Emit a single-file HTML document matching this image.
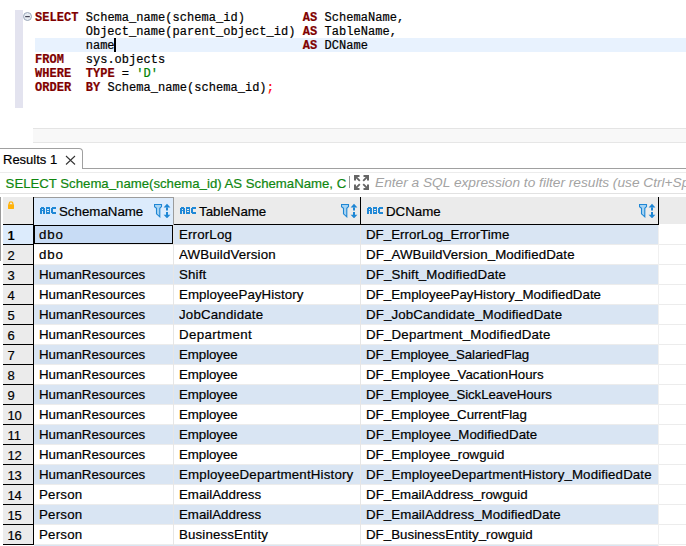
<!DOCTYPE html>
<html><head><meta charset="utf-8"><style>
*{margin:0;padding:0;box-sizing:border-box}
html,body{width:686px;height:546px;overflow:hidden;background:#fff}
body{position:relative;font-family:"Liberation Sans",sans-serif;color:#000}
.a{position:absolute}
.code{position:absolute;left:35px;top:11px;letter-spacing:0.036px;font-family:"Liberation Mono",monospace;font-size:12px;line-height:14px;white-space:pre;color:#000}
.k{color:#7f0000;font-weight:bold}
.s{color:#008000}
.r{color:#f00}
.cell{position:absolute;height:19px;font-size:13.3px;line-height:19px;white-space:nowrap;overflow:hidden}
.abc{position:absolute}
.u{position:relative;top:-1px}
div{-webkit-text-stroke:0.2px currentColor}
.filt{position:absolute}
</style></head><body>

<div class="a" style="left:15px;top:10px;width:8px;height:98px;background:#e3e3ef"></div>
<div class="a" style="left:35px;top:38px;width:651px;height:14px;background:#e8f2fe"></div>
<svg class="a" style="left:23px;top:12px" width="10" height="10" viewBox="0 0 10 10"><circle cx="4.5" cy="4.5" r="4" fill="#e6ebf2" stroke="#9aa6b8" stroke-width="1"/><rect x="2.2" y="4" width="4.6" height="1.2" fill="#445"/></svg>
<div class="code"><span class="k">SELECT</span> Schema_name(schema_id)        <span class="k">AS</span> SchemaName,
       Object_name(parent_object_id) <span class="k">AS</span> TableName,
       name                          <span class="k">AS</span> DCName
<span class="k">FROM</span>   sys.objects
<span class="k">WHERE</span>  <span class="k">TYPE</span> = <span class="s">'D'</span>
<span class="k">ORDER</span>  <span class="k">BY</span> Schema_name(schema_id)<span class="r">;</span></div>
<div class="a" style="left:114px;top:38px;width:2px;height:14px;background:#000"></div>
<div class="a" style="left:33px;top:128px;width:653px;height:15px;background:#f8f8f8;border-top:1px solid #e4e4e4;border-bottom:1px solid #e6e6e6"></div>
<div class="a" style="left:-1px;top:148px;width:84px;height:21px;background:#fff;border:1px solid #a0a0a0;border-bottom:none;border-top-right-radius:4px"></div>
<div class="a" style="left:83px;top:168px;width:603px;height:1px;background:#a0a0a0"></div>
<div class="a" style="left:3px;top:152px;font-size:13px;line-height:16px">Results 1</div>
<svg class="a" style="left:65px;top:154.5px" width="11" height="10" viewBox="0 0 11 10"><path d="M1 1L10 9.5M10 1L1 9.5" stroke="#333" stroke-width="1.05"/></svg>
<div class="a" style="left:0;top:172px;width:686px;height:1px;background:#ececec"></div>
<div class="a" style="left:5.6px;top:175.6px;font-size:13.2px;line-height:16px;color:#0f870f;white-space:nowrap">SELECT Schema<span class="u">_</span>name(schema<span class="u">_</span>id) AS SchemaName, C</div>
<div class="a" style="left:349px;top:176px;width:1px;height:12px;background:#999"></div>
<svg class="a" style="left:354px;top:175px" width="16" height="16" viewBox="0 0 16 16"><g fill="#666"><path d="M0 0H5.5V2H2V5.5H0Z"/><path d="M15 0H9.5V2H13V5.5H15Z"/><path d="M0 15H5.5V13H2V9.5H0Z"/><path d="M15 15H9.5V13H13V9.5H15Z"/></g><g stroke="#666" stroke-width="1.8"><path d="M1 1L5.8 5.8M14 1L9.2 5.8M1 14L5.8 9.2M14 14L9.2 9.2"/></g></svg>
<div class="a" style="left:375px;top:174.6px;font-size:13.7px;line-height:16px;color:#a3a3a3;-webkit-text-stroke:0;font-style:italic;white-space:nowrap">Enter a SQL expression to filter results (use Ctrl+Space)</div>
<div class="a" style="left:0;top:193px;width:686px;height:1px;background:#e2e2e2"></div>
<div class="a" style="left:0;top:197px;width:1px;height:64px;background:#9a9a9a"></div>
<div class="a" style="left:3px;top:197px;width:683px;height:27px;background:#ebebeb"></div>
<div class="a" style="left:3px;top:224px;width:655px;height:1px;background:#000"></div>
<div class="a" style="left:34px;top:197px;width:140px;height:28px;background:#dcebfc;border-top:1px solid #9c9c9c;border-right:1px solid #9c9c9c"></div>
<div class="a" style="left:33px;top:197px;width:1px;height:348px;background:#000"></div>
<div class="a" style="left:360px;top:197px;width:1px;height:28px;background:#000"></div>
<div class="a" style="left:658px;top:197px;width:1px;height:28px;background:#000"></div>
<svg class="a" style="left:8px;top:201px" width="6" height="8" viewBox="0 0 6 8"><path d="M1.2 3.5V2.6a1.8 1.8 0 0 1 3.6 0V3.5" stroke="#ffb20a" stroke-width="1.3" fill="none"/><rect x="0" y="3.2" width="6" height="4.8" rx="0.4" fill="#ffb20a"/></svg>
<svg class="abc" style="left:40px;top:207px" width="16" height="7" viewBox="0 0 16 7" shape-rendering="crispEdges"><g fill="#2088d6"><rect x="1" y="0" width="1" height="1"/><rect x="2" y="0" width="1" height="1"/><rect x="3" y="0" width="1" height="1"/><rect x="0" y="1" width="1" height="1"/><rect x="1" y="1" width="1" height="1"/><rect x="2" y="1" width="1" height="1"/><rect x="3" y="1" width="1" height="1"/><rect x="4" y="1" width="1" height="1"/><rect x="0" y="2" width="1" height="1"/><rect x="1" y="2" width="1" height="1"/><rect x="3" y="2" width="1" height="1"/><rect x="4" y="2" width="1" height="1"/><rect x="0" y="3" width="1" height="1"/><rect x="1" y="3" width="1" height="1"/><rect x="2" y="3" width="1" height="1"/><rect x="3" y="3" width="1" height="1"/><rect x="4" y="3" width="1" height="1"/><rect x="0" y="4" width="1" height="1"/><rect x="1" y="4" width="1" height="1"/><rect x="3" y="4" width="1" height="1"/><rect x="4" y="4" width="1" height="1"/><rect x="0" y="5" width="1" height="1"/><rect x="1" y="5" width="1" height="1"/><rect x="3" y="5" width="1" height="1"/><rect x="4" y="5" width="1" height="1"/><rect x="0" y="6" width="1" height="1"/><rect x="1" y="6" width="1" height="1"/><rect x="3" y="6" width="1" height="1"/><rect x="4" y="6" width="1" height="1"/><rect x="6" y="0" width="1" height="1"/><rect x="7" y="0" width="1" height="1"/><rect x="8" y="0" width="1" height="1"/><rect x="9" y="0" width="1" height="1"/><rect x="6" y="1" width="1" height="1"/><rect x="7" y="1" width="1" height="1"/><rect x="8" y="1" width="1" height="1"/><rect x="9" y="1" width="1" height="1"/><rect x="6" y="2" width="1" height="1"/><rect x="9" y="2" width="1" height="1"/><rect x="6" y="3" width="1" height="1"/><rect x="7" y="3" width="1" height="1"/><rect x="8" y="3" width="1" height="1"/><rect x="9" y="3" width="1" height="1"/><rect x="6" y="4" width="1" height="1"/><rect x="9" y="4" width="1" height="1"/><rect x="6" y="5" width="1" height="1"/><rect x="7" y="5" width="1" height="1"/><rect x="8" y="5" width="1" height="1"/><rect x="9" y="5" width="1" height="1"/><rect x="6" y="6" width="1" height="1"/><rect x="7" y="6" width="1" height="1"/><rect x="8" y="6" width="1" height="1"/><rect x="9" y="6" width="1" height="1"/><rect x="12" y="0" width="1" height="1"/><rect x="13" y="0" width="1" height="1"/><rect x="14" y="0" width="1" height="1"/><rect x="15" y="0" width="1" height="1"/><rect x="11" y="1" width="1" height="1"/><rect x="12" y="1" width="1" height="1"/><rect x="13" y="1" width="1" height="1"/><rect x="14" y="1" width="1" height="1"/><rect x="15" y="1" width="1" height="1"/><rect x="11" y="2" width="1" height="1"/><rect x="12" y="2" width="1" height="1"/><rect x="11" y="3" width="1" height="1"/><rect x="12" y="3" width="1" height="1"/><rect x="11" y="4" width="1" height="1"/><rect x="12" y="4" width="1" height="1"/><rect x="11" y="5" width="1" height="1"/><rect x="12" y="5" width="1" height="1"/><rect x="13" y="5" width="1" height="1"/><rect x="14" y="5" width="1" height="1"/><rect x="15" y="5" width="1" height="1"/><rect x="12" y="6" width="1" height="1"/><rect x="13" y="6" width="1" height="1"/><rect x="14" y="6" width="1" height="1"/><rect x="15" y="6" width="1" height="1"/></g></svg>
<div class="a" style="left:59px;top:204px;font-size:13.3px;line-height:16px">SchemaName</div>
<svg class="filt" style="left:154px;top:203px" width="17" height="15" viewBox="0 0 17 15">
<path d="M0.5 1.5H7.5V3.6L5.8 5.3V13.8L2.5 10.8V5.3L0.5 3.6Z" fill="#a6d3f3" stroke="#1e86d4" stroke-width="1.1" stroke-linejoin="miter"/>
<g fill="#1e86d4"><path d="M9.6 4.4L13 0.7L16.4 4.4Z"/><rect x="12" y="4.4" width="2" height="3.1"/><rect x="12" y="9" width="2" height="3.2"/><path d="M9.6 11.8L13 15.3L16.4 11.8Z"/></g>
</svg>
<svg class="abc" style="left:180px;top:207px" width="16" height="7" viewBox="0 0 16 7" shape-rendering="crispEdges"><g fill="#2088d6"><rect x="1" y="0" width="1" height="1"/><rect x="2" y="0" width="1" height="1"/><rect x="3" y="0" width="1" height="1"/><rect x="0" y="1" width="1" height="1"/><rect x="1" y="1" width="1" height="1"/><rect x="2" y="1" width="1" height="1"/><rect x="3" y="1" width="1" height="1"/><rect x="4" y="1" width="1" height="1"/><rect x="0" y="2" width="1" height="1"/><rect x="1" y="2" width="1" height="1"/><rect x="3" y="2" width="1" height="1"/><rect x="4" y="2" width="1" height="1"/><rect x="0" y="3" width="1" height="1"/><rect x="1" y="3" width="1" height="1"/><rect x="2" y="3" width="1" height="1"/><rect x="3" y="3" width="1" height="1"/><rect x="4" y="3" width="1" height="1"/><rect x="0" y="4" width="1" height="1"/><rect x="1" y="4" width="1" height="1"/><rect x="3" y="4" width="1" height="1"/><rect x="4" y="4" width="1" height="1"/><rect x="0" y="5" width="1" height="1"/><rect x="1" y="5" width="1" height="1"/><rect x="3" y="5" width="1" height="1"/><rect x="4" y="5" width="1" height="1"/><rect x="0" y="6" width="1" height="1"/><rect x="1" y="6" width="1" height="1"/><rect x="3" y="6" width="1" height="1"/><rect x="4" y="6" width="1" height="1"/><rect x="6" y="0" width="1" height="1"/><rect x="7" y="0" width="1" height="1"/><rect x="8" y="0" width="1" height="1"/><rect x="9" y="0" width="1" height="1"/><rect x="6" y="1" width="1" height="1"/><rect x="7" y="1" width="1" height="1"/><rect x="8" y="1" width="1" height="1"/><rect x="9" y="1" width="1" height="1"/><rect x="6" y="2" width="1" height="1"/><rect x="9" y="2" width="1" height="1"/><rect x="6" y="3" width="1" height="1"/><rect x="7" y="3" width="1" height="1"/><rect x="8" y="3" width="1" height="1"/><rect x="9" y="3" width="1" height="1"/><rect x="6" y="4" width="1" height="1"/><rect x="9" y="4" width="1" height="1"/><rect x="6" y="5" width="1" height="1"/><rect x="7" y="5" width="1" height="1"/><rect x="8" y="5" width="1" height="1"/><rect x="9" y="5" width="1" height="1"/><rect x="6" y="6" width="1" height="1"/><rect x="7" y="6" width="1" height="1"/><rect x="8" y="6" width="1" height="1"/><rect x="9" y="6" width="1" height="1"/><rect x="12" y="0" width="1" height="1"/><rect x="13" y="0" width="1" height="1"/><rect x="14" y="0" width="1" height="1"/><rect x="15" y="0" width="1" height="1"/><rect x="11" y="1" width="1" height="1"/><rect x="12" y="1" width="1" height="1"/><rect x="13" y="1" width="1" height="1"/><rect x="14" y="1" width="1" height="1"/><rect x="15" y="1" width="1" height="1"/><rect x="11" y="2" width="1" height="1"/><rect x="12" y="2" width="1" height="1"/><rect x="11" y="3" width="1" height="1"/><rect x="12" y="3" width="1" height="1"/><rect x="11" y="4" width="1" height="1"/><rect x="12" y="4" width="1" height="1"/><rect x="11" y="5" width="1" height="1"/><rect x="12" y="5" width="1" height="1"/><rect x="13" y="5" width="1" height="1"/><rect x="14" y="5" width="1" height="1"/><rect x="15" y="5" width="1" height="1"/><rect x="12" y="6" width="1" height="1"/><rect x="13" y="6" width="1" height="1"/><rect x="14" y="6" width="1" height="1"/><rect x="15" y="6" width="1" height="1"/></g></svg>
<div class="a" style="left:199px;top:204px;font-size:13.3px;line-height:16px">TableName</div>
<svg class="filt" style="left:341px;top:203px" width="17" height="15" viewBox="0 0 17 15">
<path d="M0.5 1.5H7.5V3.6L5.8 5.3V13.8L2.5 10.8V5.3L0.5 3.6Z" fill="#a6d3f3" stroke="#1e86d4" stroke-width="1.1" stroke-linejoin="miter"/>
<g fill="#1e86d4"><path d="M9.6 4.4L13 0.7L16.4 4.4Z"/><rect x="12" y="4.4" width="2" height="3.1"/><rect x="12" y="9" width="2" height="3.2"/><path d="M9.6 11.8L13 15.3L16.4 11.8Z"/></g>
</svg>
<svg class="abc" style="left:367px;top:207px" width="16" height="7" viewBox="0 0 16 7" shape-rendering="crispEdges"><g fill="#2088d6"><rect x="1" y="0" width="1" height="1"/><rect x="2" y="0" width="1" height="1"/><rect x="3" y="0" width="1" height="1"/><rect x="0" y="1" width="1" height="1"/><rect x="1" y="1" width="1" height="1"/><rect x="2" y="1" width="1" height="1"/><rect x="3" y="1" width="1" height="1"/><rect x="4" y="1" width="1" height="1"/><rect x="0" y="2" width="1" height="1"/><rect x="1" y="2" width="1" height="1"/><rect x="3" y="2" width="1" height="1"/><rect x="4" y="2" width="1" height="1"/><rect x="0" y="3" width="1" height="1"/><rect x="1" y="3" width="1" height="1"/><rect x="2" y="3" width="1" height="1"/><rect x="3" y="3" width="1" height="1"/><rect x="4" y="3" width="1" height="1"/><rect x="0" y="4" width="1" height="1"/><rect x="1" y="4" width="1" height="1"/><rect x="3" y="4" width="1" height="1"/><rect x="4" y="4" width="1" height="1"/><rect x="0" y="5" width="1" height="1"/><rect x="1" y="5" width="1" height="1"/><rect x="3" y="5" width="1" height="1"/><rect x="4" y="5" width="1" height="1"/><rect x="0" y="6" width="1" height="1"/><rect x="1" y="6" width="1" height="1"/><rect x="3" y="6" width="1" height="1"/><rect x="4" y="6" width="1" height="1"/><rect x="6" y="0" width="1" height="1"/><rect x="7" y="0" width="1" height="1"/><rect x="8" y="0" width="1" height="1"/><rect x="9" y="0" width="1" height="1"/><rect x="6" y="1" width="1" height="1"/><rect x="7" y="1" width="1" height="1"/><rect x="8" y="1" width="1" height="1"/><rect x="9" y="1" width="1" height="1"/><rect x="6" y="2" width="1" height="1"/><rect x="9" y="2" width="1" height="1"/><rect x="6" y="3" width="1" height="1"/><rect x="7" y="3" width="1" height="1"/><rect x="8" y="3" width="1" height="1"/><rect x="9" y="3" width="1" height="1"/><rect x="6" y="4" width="1" height="1"/><rect x="9" y="4" width="1" height="1"/><rect x="6" y="5" width="1" height="1"/><rect x="7" y="5" width="1" height="1"/><rect x="8" y="5" width="1" height="1"/><rect x="9" y="5" width="1" height="1"/><rect x="6" y="6" width="1" height="1"/><rect x="7" y="6" width="1" height="1"/><rect x="8" y="6" width="1" height="1"/><rect x="9" y="6" width="1" height="1"/><rect x="12" y="0" width="1" height="1"/><rect x="13" y="0" width="1" height="1"/><rect x="14" y="0" width="1" height="1"/><rect x="15" y="0" width="1" height="1"/><rect x="11" y="1" width="1" height="1"/><rect x="12" y="1" width="1" height="1"/><rect x="13" y="1" width="1" height="1"/><rect x="14" y="1" width="1" height="1"/><rect x="15" y="1" width="1" height="1"/><rect x="11" y="2" width="1" height="1"/><rect x="12" y="2" width="1" height="1"/><rect x="11" y="3" width="1" height="1"/><rect x="12" y="3" width="1" height="1"/><rect x="11" y="4" width="1" height="1"/><rect x="12" y="4" width="1" height="1"/><rect x="11" y="5" width="1" height="1"/><rect x="12" y="5" width="1" height="1"/><rect x="13" y="5" width="1" height="1"/><rect x="14" y="5" width="1" height="1"/><rect x="15" y="5" width="1" height="1"/><rect x="12" y="6" width="1" height="1"/><rect x="13" y="6" width="1" height="1"/><rect x="14" y="6" width="1" height="1"/><rect x="15" y="6" width="1" height="1"/></g></svg>
<div class="a" style="left:386px;top:204px;font-size:13.3px;line-height:16px">DCName</div>
<svg class="filt" style="left:639px;top:203px" width="17" height="15" viewBox="0 0 17 15">
<path d="M0.5 1.5H7.5V3.6L5.8 5.3V13.8L2.5 10.8V5.3L0.5 3.6Z" fill="#a6d3f3" stroke="#1e86d4" stroke-width="1.1" stroke-linejoin="miter"/>
<g fill="#1e86d4"><path d="M9.6 4.4L13 0.7L16.4 4.4Z"/><rect x="12" y="4.4" width="2" height="3.1"/><rect x="12" y="9" width="2" height="3.2"/><path d="M9.6 11.8L13 15.3L16.4 11.8Z"/></g>
</svg>
<div class="a" style="left:3px;top:225px;width:30px;height:19px;background:#dcebfc"></div>
<div class="a" style="left:3px;top:244px;width:30px;height:1px;background:#000"></div>
<div class="cell" style="left:7.4px;top:226px;width:25px;font-size:13px;font-weight:bold;-webkit-text-stroke:0">1</div>
<div class="a" style="left:34px;top:225px;width:624px;height:19px;background:#d9e5f3"></div>
<div class="a" style="left:34px;top:244px;width:652px;height:1px;background:#ececec"></div>
<div class="cell" style="left:179px;top:225px;width:180px;letter-spacing:0.157px">ErrorLog</div>
<div class="cell" style="left:366px;top:225px;width:291px;letter-spacing:0.02px">DF<span class="u">_</span>ErrorLog<span class="u">_</span>ErrorTime</div>
<div class="a" style="left:3px;top:245px;width:30px;height:19px;background:#ebebeb"></div>
<div class="a" style="left:3px;top:264px;width:30px;height:1px;background:#000"></div>
<div class="cell" style="left:7.4px;top:246px;width:25px;font-size:13px;">2</div>
<div class="a" style="left:34px;top:245px;width:624px;height:19px;background:#fff"></div>
<div class="a" style="left:34px;top:264px;width:652px;height:1px;background:#ececec"></div>
<div class="cell" style="left:39px;top:245px;width:133px;letter-spacing:0.85px">dbo</div>
<div class="cell" style="left:179px;top:245px;width:180px;letter-spacing:0.138px">AWBuildVersion</div>
<div class="cell" style="left:366px;top:245px;width:291px;letter-spacing:0.097px">DF<span class="u">_</span>AWBuildVersion<span class="u">_</span>ModifiedDate</div>
<div class="a" style="left:3px;top:265px;width:30px;height:19px;background:#ebebeb"></div>
<div class="a" style="left:3px;top:284px;width:30px;height:1px;background:#000"></div>
<div class="cell" style="left:7.4px;top:266px;width:25px;font-size:13px;">3</div>
<div class="a" style="left:34px;top:265px;width:624px;height:19px;background:#d9e5f3"></div>
<div class="a" style="left:34px;top:284px;width:652px;height:1px;background:#ececec"></div>
<div class="cell" style="left:39px;top:265px;width:133px;letter-spacing:-0.015px">HumanResources</div>
<div class="cell" style="left:179px;top:265px;width:180px;letter-spacing:0.175px">Shift</div>
<div class="cell" style="left:366px;top:265px;width:291px;letter-spacing:0.12px">DF<span class="u">_</span>Shift<span class="u">_</span>ModifiedDate</div>
<div class="a" style="left:3px;top:285px;width:30px;height:19px;background:#ebebeb"></div>
<div class="a" style="left:3px;top:304px;width:30px;height:1px;background:#000"></div>
<div class="cell" style="left:7.4px;top:286px;width:25px;font-size:13px;">4</div>
<div class="a" style="left:34px;top:285px;width:624px;height:19px;background:#fff"></div>
<div class="a" style="left:34px;top:304px;width:652px;height:1px;background:#ececec"></div>
<div class="cell" style="left:39px;top:285px;width:133px;letter-spacing:-0.015px">HumanResources</div>
<div class="cell" style="left:179px;top:285px;width:180px;letter-spacing:0.053px">EmployeePayHistory</div>
<div class="cell" style="left:366px;top:285px;width:291px;letter-spacing:0.021px">DF<span class="u">_</span>EmployeePayHistory<span class="u">_</span>ModifiedDate</div>
<div class="a" style="left:3px;top:305px;width:30px;height:19px;background:#ebebeb"></div>
<div class="a" style="left:3px;top:324px;width:30px;height:1px;background:#000"></div>
<div class="cell" style="left:7.4px;top:306px;width:25px;font-size:13px;">5</div>
<div class="a" style="left:34px;top:305px;width:624px;height:19px;background:#d9e5f3"></div>
<div class="a" style="left:34px;top:324px;width:652px;height:1px;background:#ececec"></div>
<div class="cell" style="left:39px;top:305px;width:133px;letter-spacing:-0.015px">HumanResources</div>
<div class="cell" style="left:179px;top:305px;width:180px;letter-spacing:0.182px">JobCandidate</div>
<div class="cell" style="left:366px;top:305px;width:291px;letter-spacing:0.115px">DF<span class="u">_</span>JobCandidate<span class="u">_</span>ModifiedDate</div>
<div class="a" style="left:3px;top:325px;width:30px;height:19px;background:#ebebeb"></div>
<div class="a" style="left:3px;top:344px;width:30px;height:1px;background:#000"></div>
<div class="cell" style="left:7.4px;top:326px;width:25px;font-size:13px;">6</div>
<div class="a" style="left:34px;top:325px;width:624px;height:19px;background:#fff"></div>
<div class="a" style="left:34px;top:344px;width:652px;height:1px;background:#ececec"></div>
<div class="cell" style="left:39px;top:325px;width:133px;letter-spacing:-0.015px">HumanResources</div>
<div class="cell" style="left:179px;top:325px;width:180px;letter-spacing:0.367px">Department</div>
<div class="cell" style="left:366px;top:325px;width:291px;letter-spacing:0.16px">DF<span class="u">_</span>Department<span class="u">_</span>ModifiedDate</div>
<div class="a" style="left:3px;top:345px;width:30px;height:19px;background:#ebebeb"></div>
<div class="a" style="left:3px;top:364px;width:30px;height:1px;background:#000"></div>
<div class="cell" style="left:7.4px;top:346px;width:25px;font-size:13px;">7</div>
<div class="a" style="left:34px;top:345px;width:624px;height:19px;background:#d9e5f3"></div>
<div class="a" style="left:34px;top:364px;width:652px;height:1px;background:#ececec"></div>
<div class="cell" style="left:39px;top:345px;width:133px;letter-spacing:-0.015px">HumanResources</div>
<div class="cell" style="left:179px;top:345px;width:180px;letter-spacing:-0.071px">Employee</div>
<div class="cell" style="left:366px;top:345px;width:291px;letter-spacing:-0.135px">DF<span class="u">_</span>Employee<span class="u">_</span>SalariedFlag</div>
<div class="a" style="left:3px;top:365px;width:30px;height:19px;background:#ebebeb"></div>
<div class="a" style="left:3px;top:384px;width:30px;height:1px;background:#000"></div>
<div class="cell" style="left:7.4px;top:366px;width:25px;font-size:13px;">8</div>
<div class="a" style="left:34px;top:365px;width:624px;height:19px;background:#fff"></div>
<div class="a" style="left:34px;top:384px;width:652px;height:1px;background:#ececec"></div>
<div class="cell" style="left:39px;top:365px;width:133px;letter-spacing:-0.015px">HumanResources</div>
<div class="cell" style="left:179px;top:365px;width:180px;letter-spacing:-0.071px">Employee</div>
<div class="cell" style="left:366px;top:365px;width:291px;letter-spacing:-0.012px">DF<span class="u">_</span>Employee<span class="u">_</span>VacationHours</div>
<div class="a" style="left:3px;top:385px;width:30px;height:19px;background:#ebebeb"></div>
<div class="a" style="left:3px;top:404px;width:30px;height:1px;background:#000"></div>
<div class="cell" style="left:7.4px;top:386px;width:25px;font-size:13px;">9</div>
<div class="a" style="left:34px;top:385px;width:624px;height:19px;background:#d9e5f3"></div>
<div class="a" style="left:34px;top:404px;width:652px;height:1px;background:#ececec"></div>
<div class="cell" style="left:39px;top:385px;width:133px;letter-spacing:-0.015px">HumanResources</div>
<div class="cell" style="left:179px;top:385px;width:180px;letter-spacing:-0.071px">Employee</div>
<div class="cell" style="left:366px;top:385px;width:291px;letter-spacing:-0.104px">DF<span class="u">_</span>Employee<span class="u">_</span>SickLeaveHours</div>
<div class="a" style="left:3px;top:405px;width:30px;height:19px;background:#ebebeb"></div>
<div class="a" style="left:3px;top:424px;width:30px;height:1px;background:#000"></div>
<div class="cell" style="left:7.4px;top:406px;width:25px;font-size:13px;">10</div>
<div class="a" style="left:34px;top:405px;width:624px;height:19px;background:#fff"></div>
<div class="a" style="left:34px;top:424px;width:652px;height:1px;background:#ececec"></div>
<div class="cell" style="left:39px;top:405px;width:133px;letter-spacing:-0.015px">HumanResources</div>
<div class="cell" style="left:179px;top:405px;width:180px;letter-spacing:-0.071px">Employee</div>
<div class="cell" style="left:366px;top:405px;width:291px;letter-spacing:-0.05px">DF<span class="u">_</span>Employee<span class="u">_</span>CurrentFlag</div>
<div class="a" style="left:3px;top:425px;width:30px;height:19px;background:#ebebeb"></div>
<div class="a" style="left:3px;top:444px;width:30px;height:1px;background:#000"></div>
<div class="cell" style="left:7.4px;top:426px;width:25px;font-size:13px;">11</div>
<div class="a" style="left:34px;top:425px;width:624px;height:19px;background:#d9e5f3"></div>
<div class="a" style="left:34px;top:444px;width:652px;height:1px;background:#ececec"></div>
<div class="cell" style="left:39px;top:425px;width:133px;letter-spacing:-0.015px">HumanResources</div>
<div class="cell" style="left:179px;top:425px;width:180px;letter-spacing:-0.071px">Employee</div>
<div class="cell" style="left:366px;top:425px;width:291px;letter-spacing:0.052px">DF<span class="u">_</span>Employee<span class="u">_</span>ModifiedDate</div>
<div class="a" style="left:3px;top:445px;width:30px;height:19px;background:#ebebeb"></div>
<div class="a" style="left:3px;top:464px;width:30px;height:1px;background:#000"></div>
<div class="cell" style="left:7.4px;top:446px;width:25px;font-size:13px;">12</div>
<div class="a" style="left:34px;top:445px;width:624px;height:19px;background:#fff"></div>
<div class="a" style="left:34px;top:464px;width:652px;height:1px;background:#ececec"></div>
<div class="cell" style="left:39px;top:445px;width:133px;letter-spacing:-0.015px">HumanResources</div>
<div class="cell" style="left:179px;top:445px;width:180px;letter-spacing:-0.071px">Employee</div>
<div class="cell" style="left:366px;top:445px;width:291px;letter-spacing:0.006px">DF<span class="u">_</span>Employee<span class="u">_</span>rowguid</div>
<div class="a" style="left:3px;top:465px;width:30px;height:19px;background:#ebebeb"></div>
<div class="a" style="left:3px;top:484px;width:30px;height:1px;background:#000"></div>
<div class="cell" style="left:7.4px;top:466px;width:25px;font-size:13px;">13</div>
<div class="a" style="left:34px;top:465px;width:624px;height:19px;background:#d9e5f3"></div>
<div class="a" style="left:34px;top:484px;width:652px;height:1px;background:#ececec"></div>
<div class="cell" style="left:39px;top:465px;width:133px;letter-spacing:-0.015px">HumanResources</div>
<div class="cell" style="left:179px;top:465px;width:180px;letter-spacing:0.179px">EmployeeDepartmentHistory</div>
<div class="cell" style="left:366px;top:465px;width:291px;letter-spacing:0.118px">DF<span class="u">_</span>EmployeeDepartmentHistory<span class="u">_</span>ModifiedDate</div>
<div class="a" style="left:3px;top:485px;width:30px;height:19px;background:#ebebeb"></div>
<div class="a" style="left:3px;top:504px;width:30px;height:1px;background:#000"></div>
<div class="cell" style="left:7.4px;top:486px;width:25px;font-size:13px;">14</div>
<div class="a" style="left:34px;top:485px;width:624px;height:19px;background:#fff"></div>
<div class="a" style="left:34px;top:504px;width:652px;height:1px;background:#ececec"></div>
<div class="cell" style="left:39px;top:485px;width:133px;letter-spacing:0.2px">Person</div>
<div class="cell" style="left:179px;top:485px;width:180px;letter-spacing:0.0px">EmailAddress</div>
<div class="cell" style="left:366px;top:485px;width:291px;letter-spacing:0.023px">DF<span class="u">_</span>EmailAddress<span class="u">_</span>rowguid</div>
<div class="a" style="left:3px;top:505px;width:30px;height:19px;background:#ebebeb"></div>
<div class="a" style="left:3px;top:524px;width:30px;height:1px;background:#000"></div>
<div class="cell" style="left:7.4px;top:506px;width:25px;font-size:13px;">15</div>
<div class="a" style="left:34px;top:505px;width:624px;height:19px;background:#d9e5f3"></div>
<div class="a" style="left:34px;top:524px;width:652px;height:1px;background:#ececec"></div>
<div class="cell" style="left:39px;top:505px;width:133px;letter-spacing:0.2px">Person</div>
<div class="cell" style="left:179px;top:505px;width:180px;letter-spacing:0.0px">EmailAddress</div>
<div class="cell" style="left:366px;top:505px;width:291px;letter-spacing:0.063px">DF<span class="u">_</span>EmailAddress<span class="u">_</span>ModifiedDate</div>
<div class="a" style="left:3px;top:525px;width:30px;height:19px;background:#ebebeb"></div>
<div class="a" style="left:3px;top:544px;width:30px;height:1px;background:#000"></div>
<div class="cell" style="left:7.4px;top:526px;width:25px;font-size:13px;">16</div>
<div class="a" style="left:34px;top:525px;width:624px;height:19px;background:#fff"></div>
<div class="a" style="left:34px;top:544px;width:652px;height:1px;background:#ececec"></div>
<div class="cell" style="left:39px;top:525px;width:133px;letter-spacing:0.2px">Person</div>
<div class="cell" style="left:179px;top:525px;width:180px;letter-spacing:0.131px">BusinessEntity</div>
<div class="cell" style="left:366px;top:525px;width:291px;letter-spacing:0.017px">DF<span class="u">_</span>BusinessEntity<span class="u">_</span>rowguid</div>
<div class="a" style="left:34px;top:545px;width:624px;height:1px;background:#d9e5f3"></div>
<div class="a" style="left:173px;top:225px;width:1px;height:321px;background:#e6e6e6"></div>
<div class="a" style="left:360px;top:225px;width:1px;height:321px;background:#e6e6e6"></div>
<div class="a" style="left:658px;top:225px;width:1px;height:321px;background:#f0f0f0"></div>
<div class="a" style="left:33px;top:225px;width:140px;height:19px;background:#c8dcf5;border:1px solid #000;border-left-width:2px"></div>
<div class="cell" style="left:39px;top:225px;width:120px;letter-spacing:0.85px">dbo</div>
</body></html>
